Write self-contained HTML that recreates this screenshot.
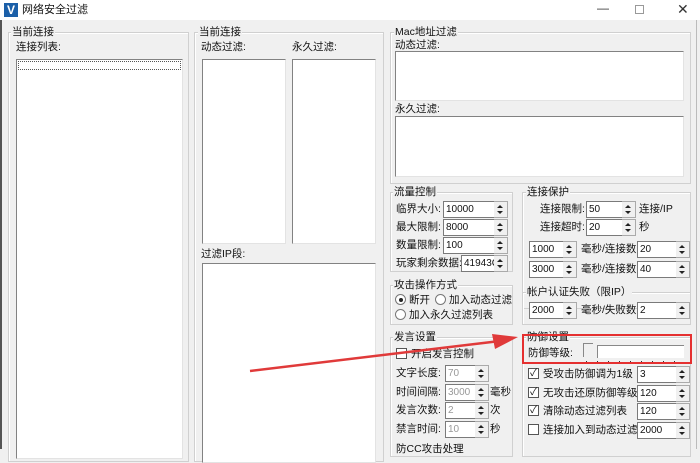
<!DOCTYPE html><html><head><meta charset="utf-8"><style>
*{box-sizing:border-box;margin:0;padding:0}
body{width:700px;height:449px;overflow:hidden;background:#f0f0f0;font:10.5px "Liberation Sans","Noto Sans CJK SC",sans-serif;color:#111;position:relative}
.a{position:absolute;white-space:nowrap;line-height:14px}
.g{position:absolute;border:1px solid #d0d0d0;box-shadow:inset 1px 1px 0 #fff}
.gt{position:absolute;background:#f0f0f0;padding:0 1px;line-height:14px;white-space:nowrap}
.lb{position:absolute;background:#fff;border:1px solid #828282;border-right-color:#e3e3e3;border-bottom-color:#e3e3e3}
.in{position:absolute;background:#fff;border:1px solid #7a7a7a;border-right:none;height:17px;font-size:10px;line-height:15px;padding-left:2px;overflow:hidden}
.dis{color:#999}
.sp{position:absolute;width:14px;height:17px;background:#f0f0f0;border:1px solid #aaa;border-left:none}
.sp:before{content:"";position:absolute;left:3px;top:3px;border:3px solid transparent;border-bottom:3px solid #222;border-top:none}
.sp:after{content:"";position:absolute;left:3px;top:9px;border:3px solid transparent;border-top:3px solid #222;border-bottom:none}
.cb{position:absolute;width:11px;height:11px;border:1px solid #555;background:#fff;font-size:10px;line-height:9px;text-align:center}
.rd{position:absolute;width:11px;height:11px;border:1px solid #777;border-radius:50%;background:#fff}
</style></head><body>
<div style="position:absolute;left:0;top:0;width:700px;height:20px;background:#fff"></div>
<div style="position:absolute;left:4px;top:3px;width:14px;height:14px;background:#1b5fa8;color:#fff;font:bold 12px 'Liberation Sans';text-align:center;line-height:14px">V</div>
<div class="a" style="left:22px;top:3px;font-size:11px">网络安全过滤</div>
<div class="a" style="left:597px;top:1px;color:#333;font-size:12px">—</div>
<div style="position:absolute;left:635px;top:5px;width:9px;height:9px;border:1px solid #999"></div>
<div class="a" style="left:677px;top:2px;font-size:14px;color:#333">✕</div>
<div style="position:absolute;left:0;top:20px;width:2px;height:429px;background:#555"></div>
<div style="position:absolute;left:696px;top:20px;width:1px;height:429px;background:#bbb"></div>

<div class="g" style="left:8px;top:32px;width:181px;height:430px"></div>
<div class="gt" style="left:11px;top:25px">当前连接</div>
<div class="a" style="left:16px;top:40px">连接列表:</div>
<div class="lb" style="left:16px;top:59px;width:167px;height:400px"></div>
<div style="position:absolute;left:18px;top:61px;width:163px;height:9px;border:1px dotted #555"></div>

<div class="g" style="left:194px;top:32px;width:190px;height:430px"></div>
<div class="gt" style="left:198px;top:25px">当前连接</div>
<div class="a" style="left:201px;top:40px">动态过滤:</div>
<div class="a" style="left:292px;top:40px">永久过滤:</div>
<div class="lb" style="left:202px;top:59px;width:84px;height:185px"></div>
<div class="lb" style="left:292px;top:59px;width:84px;height:185px"></div>
<div class="a" style="left:201px;top:247px">过滤IP段:</div>
<div class="lb" style="left:202px;top:263px;width:174px;height:200px"></div>

<div class="g" style="left:390px;top:32px;width:301px;height:152px"></div>
<div class="gt" style="left:394px;top:25px">Mac地址过滤</div>
<div class="a" style="left:395px;top:38px">动态过滤:</div>
<div class="lb" style="left:395px;top:51px;width:289px;height:50px"></div>
<div class="a" style="left:395px;top:102px">永久过滤:</div>
<div class="lb" style="left:395px;top:116px;width:289px;height:61px"></div>

<div class="g" style="left:390px;top:192px;width:123px;height:80px"></div>
<div class="gt" style="left:393px;top:185px">流量控制</div>
<div class="a" style="left:396px;top:202px">临界大小:</div><div class="in" style="left:443px;top:201px;width:51px">10000</div><div class="sp" style="left:494px;top:201px"></div>
<div class="a" style="left:396px;top:220px">最大限制:</div><div class="in" style="left:443px;top:219px;width:51px">8000</div><div class="sp" style="left:494px;top:219px"></div>
<div class="a" style="left:396px;top:238px">数量限制:</div><div class="in" style="left:443px;top:237px;width:51px">100</div><div class="sp" style="left:494px;top:237px"></div>
<div class="a" style="left:396px;top:256px">玩家剩余数据:</div><div class="in" style="left:461px;top:255px;width:33px">41943C</div><div class="sp" style="left:494px;top:255px"></div>

<div class="g" style="left:522px;top:192px;width:169px;height:117px"></div>
<div class="gt" style="left:526px;top:185px">连接保护</div>
<div class="a" style="left:540px;top:202px">连接限制:</div><div class="in" style="left:586px;top:201px;width:36px">50</div><div class="sp" style="left:622px;top:201px"></div><div class="a" style="left:639px;top:202px">连接/IP</div>
<div class="a" style="left:540px;top:220px">连接超时:</div><div class="in" style="left:586px;top:219px;width:36px">20</div><div class="sp" style="left:622px;top:219px"></div><div class="a" style="left:639px;top:220px">秒</div>
<div class="in" style="left:529px;top:241px;width:34px">1000</div><div class="sp" style="left:563px;top:241px"></div><div class="a" style="left:581px;top:242px">毫秒/连接数</div><div class="in" style="left:637px;top:241px;width:39px">20</div><div class="sp" style="left:676px;top:241px"></div>
<div class="in" style="left:529px;top:261px;width:34px">3000</div><div class="sp" style="left:563px;top:261px"></div><div class="a" style="left:581px;top:262px">毫秒/连接数</div><div class="in" style="left:637px;top:261px;width:39px">40</div><div class="sp" style="left:676px;top:261px"></div>

<div class="g" style="left:390px;top:285px;width:123px;height:40px"></div>
<div class="gt" style="left:393px;top:278px">攻击操作方式</div>
<div class="rd" style="left:395px;top:294px"></div><div style="position:absolute;left:399px;top:298px;width:4px;height:4px;border-radius:50%;background:#222"></div>
<div class="a" style="left:409px;top:293px">断开</div>
<div class="rd" style="left:435px;top:294px"></div><div class="a" style="left:449px;top:293px">加入动态过滤</div>
<div class="rd" style="left:395px;top:309px"></div><div class="a" style="left:409px;top:308px">加入永久过滤列表</div>

<div class="g" style="left:522px;top:292px;width:169px;height:33px"></div>
<div class="gt" style="left:526px;top:285px">帐户认证失败（限IP）</div>
<div class="in" style="left:529px;top:302px;width:34px">2000</div><div class="sp" style="left:563px;top:302px"></div><div class="a" style="left:581px;top:303px">毫秒/失败数</div><div class="in" style="left:637px;top:302px;width:39px">2</div><div class="sp" style="left:676px;top:302px"></div>

<div class="g" style="left:390px;top:337px;width:123px;height:120px"></div>
<div class="gt" style="left:393px;top:330px">发言设置</div>
<div class="cb" style="left:396px;top:348px"></div><div class="a" style="left:411px;top:347px">开启发言控制</div>
<div class="a" style="left:396px;top:366px">文字长度:</div><div class="in dis" style="left:445px;top:365px;width:30px">70</div><div class="sp" style="left:475px;top:365px"></div>
<div class="a" style="left:396px;top:385px">时间间隔:</div><div class="in dis" style="left:445px;top:384px;width:30px">3000</div><div class="sp" style="left:475px;top:384px"></div><div class="a" style="left:490px;top:385px">毫秒</div>
<div class="a" style="left:396px;top:403px">发言次数:</div><div class="in dis" style="left:445px;top:402px;width:30px">2</div><div class="sp" style="left:475px;top:402px"></div><div class="a" style="left:490px;top:403px">次</div>
<div class="a" style="left:396px;top:422px">禁言时间:</div><div class="in dis" style="left:445px;top:421px;width:30px">10</div><div class="sp" style="left:475px;top:421px"></div><div class="a" style="left:490px;top:422px">秒</div>
<div class="a" style="left:396px;top:442px">防CC攻击处理</div>

<div class="g" style="left:522px;top:337px;width:169px;height:120px"></div>
<div class="gt" style="left:526px;top:330px">防御设置</div>
<div class="a" style="left:528px;top:346px">防御等级:</div>
<div style="position:absolute;left:583px;top:343px;width:10px;height:14px;border:1px solid #888;border-right:none;border-bottom:none;background:#f0f0f0"></div>
<div style="position:absolute;left:597px;top:345px;width:87px;height:13px;border-top:1px solid #888;border-left:1px solid #888;background:#fff"></div>
<div style="position:absolute;left:586px;top:361px;width:98px;height:3px;background:repeating-linear-gradient(90deg,#333 0 1px,transparent 1px 11px)"></div>
<div style="position:absolute;left:522px;top:334px;width:170px;height:30px;border:2px solid #e53030"></div>
<div class="cb" style="left:528px;top:368px">✓</div><div class="a" style="left:543px;top:367px">受攻击防御调为1级</div><div class="in" style="left:637px;top:366px;width:39px">3</div><div class="sp" style="left:676px;top:366px"></div>
<div class="cb" style="left:528px;top:387px">✓</div><div class="a" style="left:543px;top:386px">无攻击还原防御等级</div><div class="in" style="left:637px;top:385px;width:39px">120</div><div class="sp" style="left:676px;top:385px"></div>
<div class="cb" style="left:528px;top:405px">✓</div><div class="a" style="left:543px;top:404px">清除动态过滤列表</div><div class="in" style="left:637px;top:403px;width:39px">120</div><div class="sp" style="left:676px;top:403px"></div>
<div class="cb" style="left:528px;top:424px"></div><div class="a" style="left:543px;top:423px">连接加入到动态过滤</div><div class="in" style="left:637px;top:422px;width:39px">2000</div><div class="sp" style="left:676px;top:422px"></div>

<svg style="position:absolute;left:0;top:0" width="700" height="449">
<path d="M250 371 L500 341" stroke="#e03a3a" stroke-width="2.5" fill="none"/>
<path d="M492 334 L518 337 L495 349 Z" fill="#e03a3a"/>
</svg>
</body></html>
